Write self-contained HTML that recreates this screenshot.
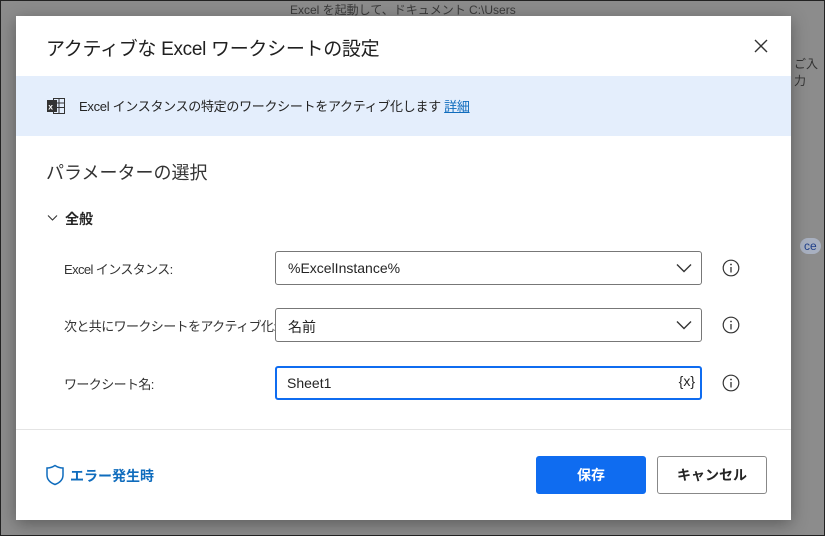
<!DOCTYPE html>
<html><head><meta charset="utf-8"><style>
*{box-sizing:border-box;margin:0;padding:0}
body{width:825px;height:536px;overflow:hidden;background:#8c8c8c;font-family:"Liberation Sans","Noto Sans CJK JP",sans-serif;color:#242424;position:relative}
.frame{position:absolute;left:0;top:0;width:825px;height:536px;border:1px solid #222;pointer-events:none}
.bg{position:absolute;color:#1f3f8a;font-size:12px}
.dlg{position:absolute;left:16px;top:16px;width:775px;height:504px;background:#fff;box-shadow:0 4px 16px rgba(0,0,0,.35)}
.a{position:absolute;white-space:nowrap}
.title{left:30px;top:18px;font-size:19px;color:#202020;letter-spacing:-.3px}
.close{left:736px;top:21px}
.banner{left:0;top:60px;width:775px;height:60px;background:#e4eefc}
.bt{left:63px;top:20px;font-size:13px;letter-spacing:-.3px}
.bt a{color:#0f6cbd;text-decoration:underline}
.sec{left:30px;top:143px;font-size:18px;color:#333}
.gen{left:49px;top:193px;font-size:14px;font-weight:bold}
.lbl{left:48px;font-size:13px;color:#333;letter-spacing:-.6px}
.inp{left:259px;width:427px;height:34px;border:1px solid #777;border-radius:3px;font-size:14px;padding:8px 0 0 12px}
.inp.f{border:2px solid #0f6cf0;padding:7px 0 0 10px}
.info{left:706px}
.div{left:0;top:413px;width:775px;height:1px;background:#e4e4e4}
.btn{top:440px;width:110px;height:38px;border-radius:3px;font-size:14px;font-weight:bold;text-align:center;line-height:36px}
</style></head><body>
<div class="bg" style="left:290px;top:1px;color:#3a3a3a">Excel を起動して、ドキュメント C:\Users</div>
<div class="bg" style="left:800px;top:238px;background:#a8b0c0;padding:1px 4px;border-radius:10px">ce</div>
<div class="bg" style="left:794px;top:55px;color:#333">ご入力</div>
<div class="dlg">
<div class="a title">アクティブな Excel ワークシートの設定</div>
<svg class="a close" width="18" height="18" viewBox="0 0 18 18"><path d="M3 3L15 15M15 3L3 15" stroke="#333" stroke-width="1.4"/></svg>
<div class="a banner">
<svg class="a" style="left:30px;top:21px" width="20" height="18" viewBox="0 0 20 18"><rect x="7.5" y="1.5" width="11" height="15" fill="none" stroke="#333"/><path d="M7.5 6h11M7.5 10.5h11M13 1.5v15" stroke="#333"/><rect x="1" y="3" width="10" height="12" fill="#333"/><text x="2.2" y="12.5" font-size="8.5" fill="#fff" font-family="Liberation Sans" font-weight="bold">x</text></svg>
<div class="a bt">Excel インスタンスの特定のワークシートをアクティブ化します <a>詳細</a></div>
</div>
<div class="a sec">パラメーターの選択</div>
<svg class="a" style="left:31px;top:198px" width="11" height="8" viewBox="0 0 11 8"><path d="M1 1.5L5.5 6L10 1.5" fill="none" stroke="#333" stroke-width="1.1"/></svg>
<div class="a gen">全般</div>
<div class="a lbl" style="top:243px">Excel インスタンス:</div>
<div class="a lbl" style="top:300px">次と共にワークシートをアクティブ化:</div>
<div class="a lbl" style="top:358px">ワークシート名:</div>
<div class="a inp" style="top:235px">%ExcelInstance%</div>
<div class="a inp" style="top:292px">名前</div>
<div class="a inp f" style="top:350px">Sheet1<span style="position:absolute;right:5px;top:5px;font-size:14px">{x}</span></div>
<svg class="a" style="left:660px;top:247px" width="16" height="10" viewBox="0 0 16 10"><path d="M1 1.5L8 8.5L15 1.5" fill="none" stroke="#333" stroke-width="1.4"/></svg>
<svg class="a" style="left:660px;top:304px" width="16" height="10" viewBox="0 0 16 10"><path d="M1 1.5L8 8.5L15 1.5" fill="none" stroke="#333" stroke-width="1.4"/></svg>
<svg class="a info" style="top:243px" width="18" height="18" viewBox="0 0 18 18"><circle cx="9" cy="9" r="7.8" fill="none" stroke="#333" stroke-width="1.2"/><path d="M9 8v5.5" stroke="#333" stroke-width="1.3"/><circle cx="9" cy="5.5" r=".9" fill="#333"/></svg>
<svg class="a info" style="top:300px" width="18" height="18" viewBox="0 0 18 18"><circle cx="9" cy="9" r="7.8" fill="none" stroke="#333" stroke-width="1.2"/><path d="M9 8v5.5" stroke="#333" stroke-width="1.3"/><circle cx="9" cy="5.5" r=".9" fill="#333"/></svg>
<svg class="a info" style="top:358px" width="18" height="18" viewBox="0 0 18 18"><circle cx="9" cy="9" r="7.8" fill="none" stroke="#333" stroke-width="1.2"/><path d="M9 8v5.5" stroke="#333" stroke-width="1.3"/><circle cx="9" cy="5.5" r=".9" fill="#333"/></svg>
<div class="a div"></div>
<svg class="a" style="left:29px;top:448px" width="20" height="22" viewBox="0 0 20 22"><path d="M10 1.5C7 3.5 4.5 4 2 4v7c0 5 4 8 8 9.5c4-1.5 8-4.5 8-9.5V4c-2.5 0-5-.5-8-2.5z" fill="none" stroke="#0f6cbd" stroke-width="1.5"/></svg>
<div class="a" style="left:54px;top:450px;font-size:14px;font-weight:bold;color:#0f6cbd">エラー発生時</div>
<div class="a btn" style="left:520px;background:#0f6cf0;color:#fff;border:1px solid #0f6cf0">保存</div>
<div class="a btn" style="left:641px;background:#fff;border:1px solid #888;color:#242424">キャンセル</div>
</div>
<div class="frame"></div>
</body></html>
